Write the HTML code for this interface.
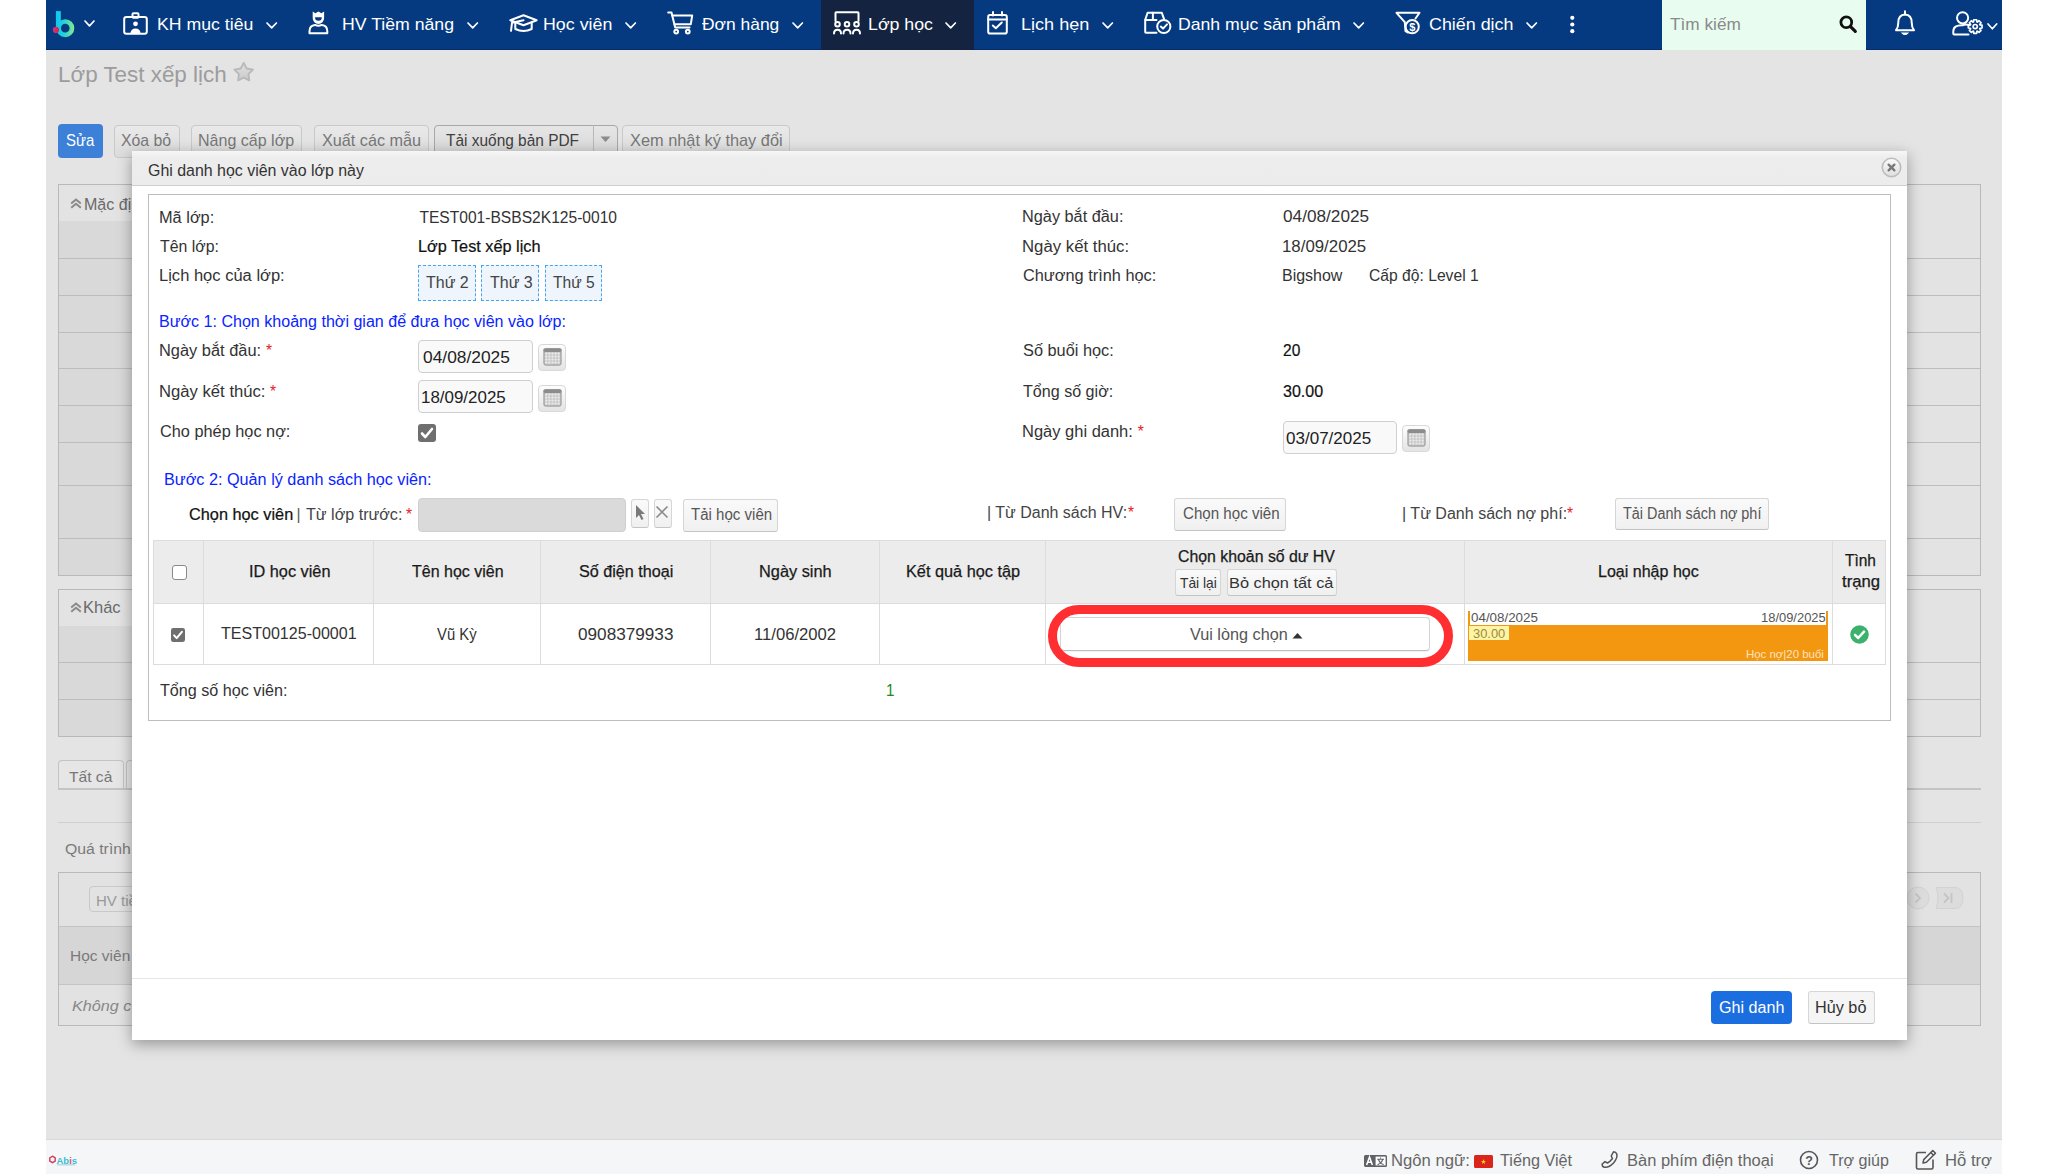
<!DOCTYPE html>
<html><head><meta charset="utf-8"><title>Ghi danh</title>
<style>
html,body{margin:0;padding:0;}
body{width:2048px;height:1174px;position:relative;overflow:hidden;background:#fff;font-family:"Liberation Sans", sans-serif;}
svg{position:absolute;overflow:visible;}
</style></head><body>
<div style="position:absolute;left:46px;top:0px;width:1956px;height:50px;background:#053a80;border-bottom:1px solid #022c6c;box-sizing:border-box;"></div>
<div style="position:absolute;left:46px;top:50px;width:1956px;height:1090px;background:#e4e4e4;"></div>
<div style="position:absolute;left:46px;top:1139px;width:1956px;height:35px;background:#f5f6f8;border-top:1px solid #d8d8d8;box-sizing:border-box;"></div>
<div style="position:absolute;left:821px;top:0px;width:153px;height:50px;background:#14233f;"></div>
<div style="position:absolute;left:1662px;top:0px;width:204px;height:50px;background:#e8fdf0;"></div>
<span style="position:absolute;left:157.43px;top:17.15px;font-size:16.6px;line-height:16.6px;color:#ffffff;white-space:nowrap;transform:scaleX(1.0657);transform-origin:0 0;">KH mục tiêu</span>
<span style="position:absolute;left:342.43px;top:17.15px;font-size:16.6px;line-height:16.6px;color:#ffffff;white-space:nowrap;transform:scaleX(1.0651);transform-origin:0 0;">HV Tiềm năng</span>
<span style="position:absolute;left:542.93px;top:17.15px;font-size:16.6px;line-height:16.6px;color:#ffffff;white-space:nowrap;transform:scaleX(1.0737);transform-origin:0 0;">Học viên</span>
<span style="position:absolute;left:702.00px;top:17.15px;font-size:16.6px;line-height:16.6px;color:#ffffff;white-space:nowrap;transform:scaleX(1.0492);transform-origin:0 0;">Đơn hàng</span>
<span style="position:absolute;left:867.63px;top:17.15px;font-size:16.6px;line-height:16.6px;color:#ffffff;white-space:nowrap;transform:scaleX(1.0706);transform-origin:0 0;">Lớp học</span>
<span style="position:absolute;left:1020.71px;top:17.15px;font-size:16.6px;line-height:16.6px;color:#ffffff;white-space:nowrap;transform:scaleX(1.0893);transform-origin:0 0;">Lịch hẹn</span>
<span style="position:absolute;left:1177.94px;top:17.15px;font-size:16.6px;line-height:16.6px;color:#ffffff;white-space:nowrap;transform:scaleX(1.0622);transform-origin:0 0;">Danh mục sản phẩm</span>
<span style="position:absolute;left:1429.40px;top:17.15px;font-size:16.6px;line-height:16.6px;color:#ffffff;white-space:nowrap;transform:scaleX(1.0770);transform-origin:0 0;">Chiến dịch</span>
<span style="position:absolute;left:1670.40px;top:17.15px;font-size:16.6px;line-height:16.6px;color:#8a8a8a;white-space:nowrap;transform:scaleX(1.0387);transform-origin:0 0;">Tìm kiếm</span>
<span style="position:absolute;left:57.96px;top:65.00px;font-size:21.5px;line-height:21.5px;color:#9c9c9c;white-space:nowrap;transform:scaleX(1.0416);transform-origin:0 0;">Lớp Test xếp lịch</span>
<div style="position:absolute;left:58px;top:124px;width:45px;height:34px;background:#3d80d8;border-radius:4px;"></div>
<span style="position:absolute;left:66.00px;top:132.32px;font-size:16.4px;line-height:16.4px;color:#ffffff;white-space:nowrap;transform:scaleX(0.9090);transform-origin:0 0;">Sửa</span>
<div style="position:absolute;left:113.5px;top:124.5px;width:66px;height:33.5px;background:linear-gradient(#e9e9e9,#dcdcdc);border:1px solid #c9c9c9;border-radius:4px;box-sizing:border-box;"></div>
<span style="position:absolute;left:121.00px;top:132.32px;font-size:16.4px;line-height:16.4px;color:#777;white-space:nowrap;transform:scaleX(0.9646);transform-origin:0 0;">Xóa bỏ</span>
<div style="position:absolute;left:191px;top:124.5px;width:111px;height:33.5px;background:linear-gradient(#e9e9e9,#dcdcdc);border:1px solid #c9c9c9;border-radius:4px;box-sizing:border-box;"></div>
<span style="position:absolute;left:198.02px;top:132.32px;font-size:16.4px;line-height:16.4px;color:#777;white-space:nowrap;transform:scaleX(0.9783);transform-origin:0 0;">Nâng cấp lớp</span>
<div style="position:absolute;left:314px;top:124.5px;width:115px;height:33.5px;background:linear-gradient(#e9e9e9,#dcdcdc);border:1px solid #c9c9c9;border-radius:4px;box-sizing:border-box;"></div>
<span style="position:absolute;left:322.00px;top:132.32px;font-size:16.4px;line-height:16.4px;color:#777;white-space:nowrap;transform:scaleX(0.9890);transform-origin:0 0;">Xuất các mẫu</span>
<div style="position:absolute;left:433.5px;top:124.5px;width:184px;height:33.5px;background:linear-gradient(#e6e6e6,#d6d6d6);border:1px solid #a8a8a8;border-radius:4px;box-sizing:border-box;"></div>
<span style="position:absolute;left:446.00px;top:132.32px;font-size:16.4px;line-height:16.4px;color:#404040;white-space:nowrap;transform:scaleX(0.9419);transform-origin:0 0;">Tải xuống bản PDF</span>
<div style="position:absolute;left:592.5px;top:125px;width:1px;height:33px;background:#b8b8b8;"></div>
<div style="position:absolute;left:622px;top:124.5px;width:168px;height:33.5px;background:linear-gradient(#e9e9e9,#dcdcdc);border:1px solid #c9c9c9;border-radius:4px;box-sizing:border-box;"></div>
<span style="position:absolute;left:630.00px;top:132.32px;font-size:16.4px;line-height:16.4px;color:#777;white-space:nowrap;transform:scaleX(0.9972);transform-origin:0 0;">Xem nhật ký thay đổi</span>
<div style="position:absolute;left:58px;top:184px;width:1923px;height:392px;border:1px solid #b9b9b9;box-sizing:border-box;background:#e3e3e3;"></div>
<div style="position:absolute;left:59px;top:221px;width:100px;height:354px;background:#d9d9d9;"></div>
<div style="position:absolute;left:59px;top:258px;width:1921px;height:1px;background:#bdbdbd;"></div>
<div style="position:absolute;left:59px;top:295px;width:1921px;height:1px;background:#bdbdbd;"></div>
<div style="position:absolute;left:59px;top:332px;width:1921px;height:1px;background:#bdbdbd;"></div>
<div style="position:absolute;left:59px;top:368px;width:1921px;height:1px;background:#bdbdbd;"></div>
<div style="position:absolute;left:59px;top:405px;width:1921px;height:1px;background:#bdbdbd;"></div>
<div style="position:absolute;left:59px;top:442px;width:1921px;height:1px;background:#bdbdbd;"></div>
<div style="position:absolute;left:59px;top:485px;width:1921px;height:1px;background:#bdbdbd;"></div>
<div style="position:absolute;left:59px;top:538px;width:1921px;height:1px;background:#bdbdbd;"></div>
<span style="position:absolute;left:84.32px;top:195.50px;font-size:16.3px;line-height:16.3px;color:#6a6a6a;white-space:nowrap;transform:scaleX(0.9842);transform-origin:0 0;">Mặc định</span>
<div style="position:absolute;left:58px;top:589px;width:1923px;height:148px;border:1px solid #b9b9b9;box-sizing:border-box;background:#e3e3e3;"></div>
<div style="position:absolute;left:59px;top:626px;width:100px;height:110px;background:#d9d9d9;"></div>
<div style="position:absolute;left:59px;top:662px;width:1921px;height:1px;background:#bdbdbd;"></div>
<div style="position:absolute;left:59px;top:699px;width:1921px;height:1px;background:#bdbdbd;"></div>
<span style="position:absolute;left:83.29px;top:599.40px;font-size:16.3px;line-height:16.3px;color:#6a6a6a;white-space:nowrap;transform:scaleX(1.0120);transform-origin:0 0;">Khác</span>
<div style="position:absolute;left:58px;top:760px;width:66px;height:28px;border:1px solid #c4c4c4;border-bottom:none;border-radius:4px 4px 0 0;box-sizing:border-box;background:#e6e6e6;"></div>
<span style="position:absolute;left:69.00px;top:768.50px;font-size:15px;line-height:15px;color:#777;white-space:nowrap;transform:scaleX(1.0392);transform-origin:0 0;">Tất cả</span>
<div style="position:absolute;left:126px;top:760px;width:20px;height:28px;border:1px solid #c4c4c4;border-bottom:none;border-radius:4px 4px 0 0;box-sizing:border-box;background:#e6e6e6;"></div>
<div style="position:absolute;left:58px;top:787.5px;width:1923px;height:2.5px;background:#c4c4c4;"></div>
<div style="position:absolute;left:58px;top:822px;width:1923px;height:1px;background:#cfcfcf;"></div>
<span style="position:absolute;left:65.20px;top:841.08px;font-size:15.5px;line-height:15.5px;color:#7a7a7a;white-space:nowrap;transform:scaleX(1.0188);transform-origin:0 0;">Quá trình</span>
<div style="position:absolute;left:58px;top:872px;width:1923px;height:154px;border:1px solid #b9b9b9;box-sizing:border-box;background:#e2e2e2;"></div>
<div style="position:absolute;left:59px;top:926px;width:1921px;height:59px;background:#d6d6d6;border-top:1px solid #c4c4c4;border-bottom:1px solid #c4c4c4;box-sizing:border-box;"></div>
<div style="position:absolute;left:89px;top:886px;width:60px;height:26px;border:1px solid #c9c9c9;border-radius:4px;box-sizing:border-box;"></div>
<span style="position:absolute;left:96.00px;top:892.50px;font-size:15px;line-height:15px;color:#999;white-space:nowrap;">HV tiềm năng</span>
<span style="position:absolute;left:70.00px;top:948.08px;font-size:15.5px;line-height:15.5px;color:#7a7a7a;white-space:nowrap;">Học viên</span>
<span style="position:absolute;left:71.60px;top:998.08px;font-size:15.5px;line-height:15.5px;color:#888;white-space:nowrap;font-style:italic;transform:scaleX(1.0450);transform-origin:0 0;">Không có dữ liệu</span>
<svg style="left:232px;top:60px" width="24" height="24" viewBox="0 0 24 24"><defs><linearGradient id="sg" x1="0" y1="0" x2="0" y2="1"><stop offset="0" stop-color="#e2e2e2"/><stop offset="1" stop-color="#c9c9c9"/></linearGradient></defs><path d="M11.70 2.90 L14.64 8.55 L21.0 9.6 L16.46 14.15 L17.3 20.3 L11.70 17.60 L6.1 20.3 L6.94 14.15 L2.4 9.6 L8.76 8.55 Z" fill="url(#sg)" stroke="#b9b9b9" stroke-width="1.9" stroke-linejoin="round"/></svg>
<svg style="left:600px;top:136px" width="11" height="7" viewBox="0 0 11 7"><path d="M0.5 0.5 L10.5 0.5 L5.5 6 Z" fill="#8c8c8c"/></svg>
<svg style="left:70px;top:198px" width="12" height="11" viewBox="0 0 12 11"><path d="M1.2 5.6 L6 1.6 L10.8 5.6 M1.2 9.8 L6 5.8 L10.8 9.8" fill="none" stroke="#8a8a8a" stroke-width="2"/></svg>
<svg style="left:70px;top:602px" width="12" height="11" viewBox="0 0 12 11"><path d="M1.2 5.6 L6 1.6 L10.8 5.6 M1.2 9.8 L6 5.8 L10.8 9.8" fill="none" stroke="#8a8a8a" stroke-width="2"/></svg>
<svg style="left:1905px;top:886px" width="60" height="24" viewBox="0 0 60 24"><circle cx="13" cy="12" r="11" fill="#dcdcdc" stroke="#d2d2d2" stroke-width="1"/><path d="M10.5 7.5 L15 12 L10.5 16.5" fill="none" stroke="#c4c4c4" stroke-width="1.8"/><path d="M31 1.5 L50 1.5 Q58 1.5 58 12 Q58 22.5 50 22.5 L31 22.5 Q35 12 31 1.5 Z" fill="#dcdcdc" stroke="#d2d2d2" stroke-width="1"/><path d="M39 7.5 L43.5 12 L39 16.5 M46.5 7 L46.5 17" fill="none" stroke="#c4c4c4" stroke-width="1.8"/></svg>
<div style="position:absolute;left:132px;top:151px;width:1775px;height:889px;background:#ffffff;box-shadow:0 4px 14px rgba(0,0,0,0.35);"></div>
<div style="position:absolute;left:132px;top:151px;width:1775px;height:35px;background:linear-gradient(#f7f7f7,#ededed 20%,#ececec);border-bottom:1px solid #cfcfcf;box-sizing:border-box;"></div>
<span style="position:absolute;left:148.00px;top:162.78px;font-size:16.8px;line-height:16.8px;color:#333;white-space:nowrap;transform:scaleX(0.9494);transform-origin:0 0;">Ghi danh học viên vào lớp này</span>
<div style="position:absolute;left:148px;top:194px;width:1743px;height:527px;border:1px solid #bdbdbd;box-sizing:border-box;"></div>
<div style="position:absolute;left:132px;top:978px;width:1775px;height:1px;background:#e6e6e6;"></div>
<span style="position:absolute;left:158.95px;top:209.59px;font-size:15.6px;line-height:15.6px;color:#333333;white-space:nowrap;transform:scaleX(1.0485);transform-origin:0 0;">Mã lớp:</span>
<span style="position:absolute;left:419.40px;top:209.59px;font-size:15.6px;line-height:15.6px;color:#333333;white-space:nowrap;">TEST001-BSBS2K125-0010</span>
<span style="position:absolute;left:160.00px;top:239.19px;font-size:15.6px;line-height:15.6px;color:#333333;white-space:nowrap;transform:scaleX(1.0165);transform-origin:0 0;">Tên lớp:</span>
<span style="position:absolute;left:418.36px;top:239.19px;font-size:15.6px;line-height:15.6px;color:#111;white-space:nowrap;transform:scaleX(1.0428);transform-origin:0 0;-webkit-text-stroke:0.2px currentColor;">Lớp Test xếp lịch</span>
<span style="position:absolute;left:158.94px;top:268.49px;font-size:15.6px;line-height:15.6px;color:#333333;white-space:nowrap;transform:scaleX(1.0598);transform-origin:0 0;">Lịch học của lớp:</span>
<div style="position:absolute;left:418px;top:265px;width:58px;height:36px;background:#eef5fd;border:1px dashed #4aa3ef;box-sizing:border-box;"></div>
<div style="position:absolute;left:481.4px;top:265px;width:57.5px;height:36px;background:#eef5fd;border:1px dashed #4aa3ef;box-sizing:border-box;"></div>
<div style="position:absolute;left:544.8px;top:265px;width:57.3px;height:36px;background:#eef5fd;border:1px dashed #4aa3ef;box-sizing:border-box;"></div>
<span style="position:absolute;left:426.00px;top:274.99px;font-size:15.6px;line-height:15.6px;color:#444;white-space:nowrap;transform:scaleX(1.0252);transform-origin:0 0;">Thứ 2</span>
<span style="position:absolute;left:489.50px;top:274.99px;font-size:15.6px;line-height:15.6px;color:#444;white-space:nowrap;transform:scaleX(1.0252);transform-origin:0 0;">Thứ 3</span>
<span style="position:absolute;left:553.00px;top:274.99px;font-size:15.6px;line-height:15.6px;color:#444;white-space:nowrap;">Thứ 5</span>
<span style="position:absolute;left:1022.36px;top:209.19px;font-size:15.6px;line-height:15.6px;color:#333333;white-space:nowrap;transform:scaleX(1.0447);transform-origin:0 0;">Ngày bắt đầu:</span>
<span style="position:absolute;left:1282.70px;top:209.19px;font-size:15.6px;line-height:15.6px;color:#333333;white-space:nowrap;transform:scaleX(1.1037);transform-origin:0 0;">04/08/2025</span>
<span style="position:absolute;left:1022.33px;top:238.99px;font-size:15.6px;line-height:15.6px;color:#333333;white-space:nowrap;transform:scaleX(1.0745);transform-origin:0 0;">Ngày kết thúc:</span>
<span style="position:absolute;left:1281.62px;top:238.99px;font-size:15.6px;line-height:15.6px;color:#333333;white-space:nowrap;transform:scaleX(1.0792);transform-origin:0 0;">18/09/2025</span>
<span style="position:absolute;left:1023.40px;top:268.39px;font-size:15.6px;line-height:15.6px;color:#333333;white-space:nowrap;transform:scaleX(1.0472);transform-origin:0 0;">Chương trình học:</span>
<span style="position:absolute;left:1281.68px;top:268.39px;font-size:15.6px;line-height:15.6px;color:#333333;white-space:nowrap;transform:scaleX(1.0242);transform-origin:0 0;">Bigshow</span>
<span style="position:absolute;left:1368.60px;top:268.39px;font-size:15.6px;line-height:15.6px;color:#333333;white-space:nowrap;transform:scaleX(1.0041);transform-origin:0 0;">Cấp độ: Level 1</span>
<span style="position:absolute;left:158.97px;top:313.99px;font-size:15.6px;line-height:15.6px;color:#0a24ff;white-space:nowrap;transform:scaleX(1.0305);transform-origin:0 0;">Bước 1: Chọn khoảng thời gian để đưa học viên vào lớp:</span>
<span style="position:absolute;left:158.95px;top:343.19px;font-size:15.6px;line-height:15.6px;color:#333333;white-space:nowrap;transform:scaleX(1.0521);transform-origin:0 0;">Ngày bắt đầu:</span>
<span style="position:absolute;left:266.00px;top:343.19px;font-size:15.6px;line-height:15.6px;color:#e8201e;white-space:nowrap;">*</span>
<span style="position:absolute;left:158.93px;top:383.99px;font-size:15.6px;line-height:15.6px;color:#333333;white-space:nowrap;transform:scaleX(1.0684);transform-origin:0 0;">Ngày kết thúc:</span>
<span style="position:absolute;left:270.00px;top:383.99px;font-size:15.6px;line-height:15.6px;color:#e8201e;white-space:nowrap;">*</span>
<span style="position:absolute;left:160.00px;top:424.39px;font-size:15.6px;line-height:15.6px;color:#333333;white-space:nowrap;transform:scaleX(1.0459);transform-origin:0 0;">Cho phép học nợ:</span>
<div style="position:absolute;left:418.4px;top:340px;width:115px;height:33px;background:#f9f9f9;border:1px solid #cfcfcf;border-radius:4px;box-sizing:border-box;"></div>
<span style="position:absolute;left:422.50px;top:348.73px;font-size:16.5px;line-height:16.5px;color:#222;white-space:nowrap;transform:scaleX(1.0521);transform-origin:0 0;">04/08/2025</span>
<div style="position:absolute;left:538px;top:344px;width:28px;height:27px;border:1px solid #d8d8d8;border-radius:4px;box-sizing:border-box;background:linear-gradient(#fdfdfd,#e4e4e4);"></div>
<svg style="left:542.6px;top:348.4px" width="19" height="18" viewBox="0 0 19 18"><rect x="0.3" y="0.3" width="18.4" height="17.4" rx="3" fill="#a4a4a4"/><rect x="0.3" y="0.3" width="18.4" height="3.6" rx="2" fill="#8c8c8c"/><rect x="1.6" y="3.9" width="15.8" height="12.5" rx="1.5" fill="#c6c6c6"/>
<g fill="#ececec"><rect x="2.2" y="4.5" width="2.1" height="2" rx="0.5"/><rect x="5.3" y="4.5" width="2.1" height="2" rx="0.5"/><rect x="8.4" y="4.5" width="2.1" height="2" rx="0.5"/><rect x="11.5" y="4.5" width="2.1" height="2" rx="0.5"/><rect x="14.6" y="4.5" width="2.1" height="2" rx="0.5"/><rect x="2.2" y="7.5" width="2.1" height="2" rx="0.5"/><rect x="5.3" y="7.5" width="2.1" height="2" rx="0.5"/><rect x="8.4" y="7.5" width="2.1" height="2" rx="0.5"/><rect x="11.5" y="7.5" width="2.1" height="2" rx="0.5"/><rect x="14.6" y="7.5" width="2.1" height="2" rx="0.5"/><rect x="2.2" y="10.5" width="2.1" height="2" rx="0.5"/><rect x="5.3" y="10.5" width="2.1" height="2" rx="0.5"/><rect x="8.4" y="10.5" width="2.1" height="2" rx="0.5"/><rect x="11.5" y="10.5" width="2.1" height="2" rx="0.5"/><rect x="14.6" y="10.5" width="2.1" height="2" rx="0.5"/><rect x="2.2" y="13.5" width="2.1" height="2" rx="0.5"/><rect x="5.3" y="13.5" width="2.1" height="2" rx="0.5"/><rect x="8.4" y="13.5" width="2.1" height="2" rx="0.5"/><rect x="11.5" y="13.5" width="2.1" height="2" rx="0.5"/><rect x="14.6" y="13.5" width="2.1" height="2" rx="0.5"/></g></svg>
<div style="position:absolute;left:418.4px;top:380.3px;width:115px;height:33px;background:#f9f9f9;border:1px solid #cfcfcf;border-radius:4px;box-sizing:border-box;"></div>
<span style="position:absolute;left:421.47px;top:389.23px;font-size:16.5px;line-height:16.5px;color:#222;white-space:nowrap;transform:scaleX(1.0257);transform-origin:0 0;">18/09/2025</span>
<div style="position:absolute;left:538px;top:384.5px;width:28px;height:27px;border:1px solid #d8d8d8;border-radius:4px;box-sizing:border-box;background:linear-gradient(#fdfdfd,#e4e4e4);"></div>
<svg style="left:542.6px;top:388.9px" width="19" height="18" viewBox="0 0 19 18"><rect x="0.3" y="0.3" width="18.4" height="17.4" rx="3" fill="#a4a4a4"/><rect x="0.3" y="0.3" width="18.4" height="3.6" rx="2" fill="#8c8c8c"/><rect x="1.6" y="3.9" width="15.8" height="12.5" rx="1.5" fill="#c6c6c6"/>
<g fill="#ececec"><rect x="2.2" y="4.5" width="2.1" height="2" rx="0.5"/><rect x="5.3" y="4.5" width="2.1" height="2" rx="0.5"/><rect x="8.4" y="4.5" width="2.1" height="2" rx="0.5"/><rect x="11.5" y="4.5" width="2.1" height="2" rx="0.5"/><rect x="14.6" y="4.5" width="2.1" height="2" rx="0.5"/><rect x="2.2" y="7.5" width="2.1" height="2" rx="0.5"/><rect x="5.3" y="7.5" width="2.1" height="2" rx="0.5"/><rect x="8.4" y="7.5" width="2.1" height="2" rx="0.5"/><rect x="11.5" y="7.5" width="2.1" height="2" rx="0.5"/><rect x="14.6" y="7.5" width="2.1" height="2" rx="0.5"/><rect x="2.2" y="10.5" width="2.1" height="2" rx="0.5"/><rect x="5.3" y="10.5" width="2.1" height="2" rx="0.5"/><rect x="8.4" y="10.5" width="2.1" height="2" rx="0.5"/><rect x="11.5" y="10.5" width="2.1" height="2" rx="0.5"/><rect x="14.6" y="10.5" width="2.1" height="2" rx="0.5"/><rect x="2.2" y="13.5" width="2.1" height="2" rx="0.5"/><rect x="5.3" y="13.5" width="2.1" height="2" rx="0.5"/><rect x="8.4" y="13.5" width="2.1" height="2" rx="0.5"/><rect x="11.5" y="13.5" width="2.1" height="2" rx="0.5"/><rect x="14.6" y="13.5" width="2.1" height="2" rx="0.5"/></g></svg>
<svg style="left:418.4px;top:424px" width="18" height="18" viewBox="0 0 18 18"><rect x="0" y="0" width="18" height="18" rx="3" fill="#6f6f6f"/><path d="M4 9.5 L7.3 13 L14 5" stroke="#fff" stroke-width="2.6" fill="none" stroke-linecap="round" stroke-linejoin="round"/></svg>
<span style="position:absolute;left:1023.40px;top:343.39px;font-size:15.6px;line-height:15.6px;color:#333333;white-space:nowrap;transform:scaleX(1.0473);transform-origin:0 0;">Số buổi học:</span>
<span style="position:absolute;left:1282.70px;top:343.39px;font-size:15.6px;line-height:15.6px;color:#111;white-space:nowrap;transform:scaleX(0.9959);transform-origin:0 0;-webkit-text-stroke:0.2px currentColor;">20</span>
<span style="position:absolute;left:1023.40px;top:383.59px;font-size:15.6px;line-height:15.6px;color:#333333;white-space:nowrap;transform:scaleX(1.0321);transform-origin:0 0;">Tổng số giờ:</span>
<span style="position:absolute;left:1282.70px;top:383.59px;font-size:15.6px;line-height:15.6px;color:#111;white-space:nowrap;transform:scaleX(1.0292);transform-origin:0 0;-webkit-text-stroke:0.2px currentColor;">30.00</span>
<span style="position:absolute;left:1022.34px;top:423.99px;font-size:15.6px;line-height:15.6px;color:#333333;white-space:nowrap;transform:scaleX(1.0569);transform-origin:0 0;">Ngày ghi danh:</span>
<span style="position:absolute;left:1137.70px;top:423.99px;font-size:15.6px;line-height:15.6px;color:#e8201e;white-space:nowrap;">*</span>
<div style="position:absolute;left:1282.7px;top:421px;width:114.5px;height:33px;background:#f9f9f9;border:1px solid #cfcfcf;border-radius:4px;box-sizing:border-box;"></div>
<span style="position:absolute;left:1285.70px;top:429.63px;font-size:16.5px;line-height:16.5px;color:#222;white-space:nowrap;transform:scaleX(1.0315);transform-origin:0 0;">03/07/2025</span>
<div style="position:absolute;left:1402px;top:425px;width:28px;height:27px;border:1px solid #d8d8d8;border-radius:4px;box-sizing:border-box;background:linear-gradient(#fdfdfd,#e4e4e4);"></div>
<svg style="left:1406.6px;top:429.4px" width="19" height="18" viewBox="0 0 19 18"><rect x="0.3" y="0.3" width="18.4" height="17.4" rx="3" fill="#a4a4a4"/><rect x="0.3" y="0.3" width="18.4" height="3.6" rx="2" fill="#8c8c8c"/><rect x="1.6" y="3.9" width="15.8" height="12.5" rx="1.5" fill="#c6c6c6"/>
<g fill="#ececec"><rect x="2.2" y="4.5" width="2.1" height="2" rx="0.5"/><rect x="5.3" y="4.5" width="2.1" height="2" rx="0.5"/><rect x="8.4" y="4.5" width="2.1" height="2" rx="0.5"/><rect x="11.5" y="4.5" width="2.1" height="2" rx="0.5"/><rect x="14.6" y="4.5" width="2.1" height="2" rx="0.5"/><rect x="2.2" y="7.5" width="2.1" height="2" rx="0.5"/><rect x="5.3" y="7.5" width="2.1" height="2" rx="0.5"/><rect x="8.4" y="7.5" width="2.1" height="2" rx="0.5"/><rect x="11.5" y="7.5" width="2.1" height="2" rx="0.5"/><rect x="14.6" y="7.5" width="2.1" height="2" rx="0.5"/><rect x="2.2" y="10.5" width="2.1" height="2" rx="0.5"/><rect x="5.3" y="10.5" width="2.1" height="2" rx="0.5"/><rect x="8.4" y="10.5" width="2.1" height="2" rx="0.5"/><rect x="11.5" y="10.5" width="2.1" height="2" rx="0.5"/><rect x="14.6" y="10.5" width="2.1" height="2" rx="0.5"/><rect x="2.2" y="13.5" width="2.1" height="2" rx="0.5"/><rect x="5.3" y="13.5" width="2.1" height="2" rx="0.5"/><rect x="8.4" y="13.5" width="2.1" height="2" rx="0.5"/><rect x="11.5" y="13.5" width="2.1" height="2" rx="0.5"/><rect x="14.6" y="13.5" width="2.1" height="2" rx="0.5"/></g></svg>
<span style="position:absolute;left:163.56px;top:471.99px;font-size:15.6px;line-height:15.6px;color:#0a24ff;white-space:nowrap;transform:scaleX(1.0401);transform-origin:0 0;">Bước 2: Quản lý danh sách học viên:</span>
<span style="position:absolute;left:188.50px;top:506.99px;font-size:15.6px;line-height:15.6px;color:#111;white-space:nowrap;transform:scaleX(1.0452);transform-origin:0 0;-webkit-text-stroke:0.22px currentColor;">Chọn học viên</span>
<span style="position:absolute;left:296.50px;top:506.99px;font-size:15.6px;line-height:15.6px;color:#555;white-space:nowrap;">|</span>
<span style="position:absolute;left:306.40px;top:506.99px;font-size:15.6px;line-height:15.6px;color:#444;white-space:nowrap;transform:scaleX(1.0328);transform-origin:0 0;">Từ lớp trước:</span>
<span style="position:absolute;left:406.00px;top:506.99px;font-size:15.6px;line-height:15.6px;color:#e8201e;white-space:nowrap;">*</span>
<div style="position:absolute;left:418px;top:497.5px;width:208px;height:34px;background:#dadada;border:1px solid #cfcfcf;border-radius:4px;box-sizing:border-box;"></div>
<div style="position:absolute;left:630.5px;top:499px;width:18px;height:28.5px;background:linear-gradient(#fafafa,#f0f0f0);border:1px solid #d6d6d6;border-bottom-color:#c4c4c4;border-radius:3px;box-sizing:border-box;"></div>
<svg style="left:633px;top:503px" width="14" height="18" viewBox="0 0 14 18"><path d="M3 2 L3 15 L6 12 L8.5 17 L10.5 16 L8 11 L12 11 Z" fill="#7a7a7a"/></svg>
<div style="position:absolute;left:653.5px;top:499px;width:18px;height:28.5px;background:linear-gradient(#fafafa,#f0f0f0);border:1px solid #d6d6d6;border-bottom-color:#c4c4c4;border-radius:3px;box-sizing:border-box;"></div>
<svg style="left:655px;top:505px" width="14" height="14" viewBox="0 0 14 14"><path d="M1.5 1.5 L12.5 12.5 M12.5 1.5 L1.5 12.5" stroke="#8a8a8a" stroke-width="1.6"/></svg>
<div style="position:absolute;left:682.6px;top:499px;width:95px;height:33px;background:linear-gradient(#fafafa,#f0f0f0);border:1px solid #d6d6d6;border-bottom-color:#c4c4c4;border-radius:3px;box-sizing:border-box;"></div>
<span style="position:absolute;left:690.50px;top:507.49px;font-size:15.6px;line-height:15.6px;color:#555;white-space:nowrap;transform:scaleX(0.9652);transform-origin:0 0;">Tải học viên</span>
<span style="position:absolute;left:987.38px;top:504.99px;font-size:15.6px;line-height:15.6px;color:#444;white-space:nowrap;transform:scaleX(1.0249);transform-origin:0 0;">| Từ Danh sách HV:</span>
<span style="position:absolute;left:1128.00px;top:504.99px;font-size:15.6px;line-height:15.6px;color:#e8201e;white-space:nowrap;">*</span>
<div style="position:absolute;left:1174.4px;top:498px;width:112px;height:33px;background:linear-gradient(#fafafa,#f0f0f0);border:1px solid #d6d6d6;border-bottom-color:#c4c4c4;border-radius:3px;box-sizing:border-box;"></div>
<span style="position:absolute;left:1182.50px;top:505.99px;font-size:15.6px;line-height:15.6px;color:#555;white-space:nowrap;transform:scaleX(0.9695);transform-origin:0 0;">Chọn học viên</span>
<span style="position:absolute;left:1401.67px;top:505.79px;font-size:15.6px;line-height:15.6px;color:#444;white-space:nowrap;transform:scaleX(1.0286);transform-origin:0 0;">| Từ Danh sách nợ phí:</span>
<span style="position:absolute;left:1567.00px;top:505.79px;font-size:15.6px;line-height:15.6px;color:#e8201e;white-space:nowrap;">*</span>
<div style="position:absolute;left:1614.6px;top:498.2px;width:154.5px;height:32px;background:linear-gradient(#fafafa,#f0f0f0);border:1px solid #d6d6d6;border-bottom-color:#c4c4c4;border-radius:3px;box-sizing:border-box;"></div>
<span style="position:absolute;left:1622.50px;top:505.99px;font-size:15.6px;line-height:15.6px;color:#555;white-space:nowrap;transform:scaleX(0.9239);transform-origin:0 0;">Tải Danh sách nợ phí</span>
<div style="position:absolute;left:152.7px;top:540px;width:1733.8px;height:63px;background:#ececec;"></div>
<div style="position:absolute;left:152.7px;top:540px;width:1733.8px;height:125px;border:1px solid #dcdcdc;box-sizing:border-box;"></div>
<div style="position:absolute;left:152.7px;top:603px;width:1733.8px;height:1px;background:#dcdcdc;"></div>
<div style="position:absolute;left:203.3px;top:540px;width:1px;height:124px;background:#dcdcdc;"></div>
<div style="position:absolute;left:373.3px;top:540px;width:1px;height:124px;background:#dcdcdc;"></div>
<div style="position:absolute;left:540px;top:540px;width:1px;height:124px;background:#dcdcdc;"></div>
<div style="position:absolute;left:710px;top:540px;width:1px;height:124px;background:#dcdcdc;"></div>
<div style="position:absolute;left:879px;top:540px;width:1px;height:124px;background:#dcdcdc;"></div>
<div style="position:absolute;left:1045px;top:540px;width:1px;height:124px;background:#dcdcdc;"></div>
<div style="position:absolute;left:1464px;top:540px;width:1px;height:124px;background:#dcdcdc;"></div>
<div style="position:absolute;left:1832px;top:540px;width:1px;height:124px;background:#dcdcdc;"></div>
<div style="position:absolute;left:172px;top:565px;width:14.5px;height:14.5px;background:#fff;border:1px solid #8a8a8a;border-radius:3px;box-sizing:border-box;"></div>
<svg style="left:171px;top:628px" width="14" height="14" viewBox="0 0 18 18"><rect x="0" y="0" width="18" height="18" rx="3" fill="#6f6f6f"/><path d="M4 9.5 L7.3 13 L14 5" stroke="#fff" stroke-width="2.6" fill="none" stroke-linecap="round" stroke-linejoin="round"/></svg>
<span style="position:absolute;left:248.76px;top:563.99px;font-size:15.6px;line-height:15.6px;color:#1a1a1a;white-space:nowrap;transform:scaleX(1.0441);transform-origin:0 0;-webkit-text-stroke:0.25px currentColor;">ID học viên</span>
<span style="position:absolute;left:412.40px;top:563.99px;font-size:15.6px;line-height:15.6px;color:#1a1a1a;white-space:nowrap;transform:scaleX(1.0258);transform-origin:0 0;-webkit-text-stroke:0.25px currentColor;">Tên học viên</span>
<span style="position:absolute;left:579.30px;top:563.99px;font-size:15.6px;line-height:15.6px;color:#1a1a1a;white-space:nowrap;transform:scaleX(1.0357);transform-origin:0 0;-webkit-text-stroke:0.25px currentColor;">Số điện thoại</span>
<span style="position:absolute;left:759.25px;top:563.99px;font-size:15.6px;line-height:15.6px;color:#1a1a1a;white-space:nowrap;transform:scaleX(1.0477);transform-origin:0 0;-webkit-text-stroke:0.25px currentColor;">Ngày sinh</span>
<span style="position:absolute;left:905.96px;top:563.99px;font-size:15.6px;line-height:15.6px;color:#1a1a1a;white-space:nowrap;transform:scaleX(1.0445);transform-origin:0 0;-webkit-text-stroke:0.25px currentColor;">Kết quả học tập</span>
<span style="position:absolute;left:1177.50px;top:549.49px;font-size:15.6px;line-height:15.6px;color:#1a1a1a;white-space:nowrap;transform:scaleX(1.0165);transform-origin:0 0;-webkit-text-stroke:0.25px currentColor;">Chọn khoản số dư HV</span>
<div style="position:absolute;left:1175.3px;top:569px;width:45.7px;height:27px;background:linear-gradient(#fafafa,#f0f0f0);border:1px solid #d6d6d6;border-bottom-color:#c4c4c4;border-radius:3px;box-sizing:border-box;"></div>
<span style="position:absolute;left:1180.00px;top:574.70px;font-size:15px;line-height:15px;color:#333;white-space:nowrap;transform:scaleX(0.9199);transform-origin:0 0;">Tải lại</span>
<div style="position:absolute;left:1227.3px;top:569px;width:110px;height:27px;background:linear-gradient(#fafafa,#f0f0f0);border:1px solid #d6d6d6;border-bottom-color:#c4c4c4;border-radius:3px;box-sizing:border-box;"></div>
<span style="position:absolute;left:1229.41px;top:574.70px;font-size:15px;line-height:15px;color:#333;white-space:nowrap;transform:scaleX(1.0884);transform-origin:0 0;">Bỏ chọn tất cả</span>
<span style="position:absolute;left:1598.47px;top:563.99px;font-size:15.6px;line-height:15.6px;color:#1a1a1a;white-space:nowrap;transform:scaleX(1.0280);transform-origin:0 0;-webkit-text-stroke:0.25px currentColor;">Loại nhập học</span>
<span style="position:absolute;left:1845.30px;top:553.29px;font-size:15.6px;line-height:15.6px;color:#1a1a1a;white-space:nowrap;transform:scaleX(0.9925);transform-origin:0 0;-webkit-text-stroke:0.25px currentColor;">Tình</span>
<span style="position:absolute;left:1841.70px;top:574.49px;font-size:15.6px;line-height:15.6px;color:#1a1a1a;white-space:nowrap;transform:scaleX(1.0697);transform-origin:0 0;-webkit-text-stroke:0.25px currentColor;">trạng</span>
<span style="position:absolute;left:221.30px;top:626.39px;font-size:15.6px;line-height:15.6px;color:#333333;white-space:nowrap;transform:scaleX(1.0290);transform-origin:0 0;">TEST00125-00001</span>
<span style="position:absolute;left:436.70px;top:626.59px;font-size:15.6px;line-height:15.6px;color:#333333;white-space:nowrap;transform:scaleX(0.9544);transform-origin:0 0;">Vũ Kỳ</span>
<span style="position:absolute;left:577.80px;top:626.59px;font-size:15.6px;line-height:15.6px;color:#333333;white-space:nowrap;transform:scaleX(1.1005);transform-origin:0 0;">0908379933</span>
<span style="position:absolute;left:753.83px;top:626.59px;font-size:15.6px;line-height:15.6px;color:#333333;white-space:nowrap;transform:scaleX(1.0663);transform-origin:0 0;">11/06/2002</span>
<div style="position:absolute;left:1060.4px;top:617.3px;width:369.5px;height:33.3px;background:#fff;border:1px solid #d4d4d4;border-bottom-color:#bdbdbd;border-radius:4px;box-sizing:border-box;box-shadow:0 1px 1px rgba(0,0,0,0.06);"></div>
<span style="position:absolute;left:1190.00px;top:627.19px;font-size:15.6px;line-height:15.6px;color:#555;white-space:nowrap;transform:scaleX(1.0402);transform-origin:0 0;">Vui lòng chọn</span>
<svg style="left:1292px;top:631.5px" width="11" height="7" viewBox="0 0 11 7"><path d="M0.5 6.5 L5.5 1 L10.5 6.5 Z" fill="#333"/></svg>
<div style="position:absolute;left:1048.2px;top:604.8px;width:405.3px;height:62.5px;border:9.2px solid #ff2e31;border-radius:31.5px;box-sizing:border-box;"></div>
<div style="position:absolute;left:1468.2px;top:625.1px;width:359.8px;height:35.7px;background:#f39610;"></div>
<div style="position:absolute;left:1468.2px;top:611px;width:2px;height:14px;background:#f39610;"></div>
<div style="position:absolute;left:1826px;top:611px;width:2px;height:14px;background:#f39610;"></div>
<div style="position:absolute;left:1468.6px;top:625.8px;width:40.4px;height:14.4px;background:#fff3a6;"></div>
<span style="position:absolute;left:1473.00px;top:626.70px;font-size:13px;line-height:13px;color:#9a8a3a;white-space:nowrap;transform:scaleX(0.9907);transform-origin:0 0;">30.00</span>
<span style="position:absolute;left:1470.70px;top:610.53px;font-size:13.2px;line-height:13.2px;color:#555;white-space:nowrap;transform:scaleX(1.0142);transform-origin:0 0;">04/08/2025</span>
<span style="position:absolute;left:1760.82px;top:610.53px;font-size:13.2px;line-height:13.2px;color:#555;white-space:nowrap;transform:scaleX(0.9804);transform-origin:0 0;">18/09/2025</span>
<span style="position:absolute;left:1745.70px;top:649.47px;font-size:11.5px;line-height:11.5px;color:#fde4c0;white-space:nowrap;transform:scaleX(0.9943);transform-origin:0 0;">Học nợ|20 buổi</span>
<svg style="left:1849.5px;top:625px" width="19" height="19" viewBox="0 0 19 19"><circle cx="9.5" cy="9.5" r="9.3" fill="#3cb16d"/><path d="M5 9.8 L8.2 13 L14 6.6" stroke="#fff" stroke-width="2.5" fill="none" stroke-linecap="round" stroke-linejoin="round"/></svg>
<span style="position:absolute;left:160.30px;top:682.99px;font-size:15.6px;line-height:15.6px;color:#333333;white-space:nowrap;transform:scaleX(1.0357);transform-origin:0 0;">Tổng số học viên:</span>
<span style="position:absolute;left:886.03px;top:682.59px;font-size:15.6px;line-height:15.6px;color:#1a8a1a;white-space:nowrap;transform:scaleX(0.9714);transform-origin:0 0;">1</span>
<div style="position:absolute;left:1710.7px;top:991.3px;width:81.2px;height:33.2px;background:#1b6ee0;border-radius:4px;"></div>
<span style="position:absolute;left:1719.00px;top:1000.16px;font-size:16px;line-height:16px;color:#fff;white-space:nowrap;transform:scaleX(1.0072);transform-origin:0 0;">Ghi danh</span>
<div style="position:absolute;left:1808.3px;top:991.3px;width:66.8px;height:33.2px;background:linear-gradient(#fafafa,#f0f0f0);border:1px solid #d6d6d6;border-bottom-color:#c4c4c4;border-radius:3px;box-sizing:border-box;background:#f5f5f5;"></div>
<span style="position:absolute;left:1815.49px;top:1000.16px;font-size:16px;line-height:16px;color:#333;white-space:nowrap;transform:scaleX(1.0141);transform-origin:0 0;">Hủy bỏ</span>
<svg style="left:1881px;top:157px" width="21" height="21" viewBox="0 0 21 21"><defs><linearGradient id="cg" x1="0" y1="0" x2="0" y2="1"><stop offset="0" stop-color="#fbfbfb"/><stop offset="1" stop-color="#dedede"/></linearGradient></defs><circle cx="10.5" cy="10.5" r="9.2" fill="url(#cg)" stroke="#bcbcbc" stroke-width="1.6"/><path d="M7.6 7.6 L13.4 13.4 M13.4 7.6 L7.6 13.4" stroke="#787878" stroke-width="2.3" stroke-linecap="round"/></svg>
<svg style="left:46px;top:5px" width="34" height="36" viewBox="0 0 34 36"><defs><linearGradient id="lg" x1="9" y1="0" x2="28" y2="0" gradientUnits="userSpaceOnUse"><stop offset="0" stop-color="#08c8f8"/><stop offset="0.45" stop-color="#22d0dc"/><stop offset="1" stop-color="#84e98c"/></linearGradient>
<linearGradient id="rd" x1="0" y1="0" x2="1" y2="0"><stop offset="0" stop-color="#b83aa0"/><stop offset="1" stop-color="#f01a24"/></linearGradient></defs>
<rect x="9.9" y="6.1" width="4.9" height="17.5" fill="url(#lg)"/>
<circle cx="19.25" cy="23.2" r="6.7" fill="none" stroke="url(#lg)" stroke-width="4.7"/>
<circle cx="9.9" cy="24.9" r="3.1" fill="url(#rd)"/></svg>
<svg style="left:84.3px;top:20px" width="11" height="6.6" viewBox="0 0 11 6.6"><path d="M1 1 L5.5 5.8 L10 1" fill="none" stroke="#fff" stroke-width="1.7" stroke-linecap="round" stroke-linejoin="round"/></svg>
<svg style="left:123px;top:11.5px" width="25" height="23" viewBox="0 0 25 23"><rect x="1.2" y="5" width="22.6" height="16.8" rx="2.2" fill="none" stroke="#fff" stroke-width="2" stroke-linecap="round" stroke-linejoin="round"/><rect x="9.5" y="1.2" width="6" height="4.6" rx="1" fill="none" stroke="#fff" stroke-width="2" stroke-linecap="round" stroke-linejoin="round"/>
<circle cx="12.5" cy="11.8" r="2.4" fill="#fff"/><path d="M7.5 21 Q8 16.5 12.5 16.5 Q17 16.5 17.5 21 Z" fill="#fff"/></svg>
<svg style="left:266px;top:22.2px" width="11.4" height="6.7" viewBox="0 0 11.4 6.7"><path d="M1 1 L5.7 5.9 L10.4 1" fill="none" stroke="#fff" stroke-width="1.7" stroke-linecap="round" stroke-linejoin="round"/></svg>
<svg style="left:308px;top:11px" width="21" height="24" viewBox="0 0 21 24"><path d="M4.7 0.6 L7.4 2.3 L10.4 0.5 L13.4 2.3 L16.1 0.6 L16.1 7.2 A5.7 5.7 0 0 1 4.7 7.2 Z" fill="#fff"/>
<path d="M7 6.2 A3.4 3.6 0 0 0 13.8 6.2 Z" fill="#053a80"/>
<path d="M1.5 22.3 L1.5 20.2 Q1.5 14.4 7 13.9 Q10.4 15.6 13.8 13.9 Q19.3 14.4 19.3 20.2 L19.3 22.3 Z" fill="none" stroke="#fff" stroke-width="2" stroke-linecap="round" stroke-linejoin="round"/></svg>
<svg style="left:467px;top:22.2px" width="11.4" height="6.7" viewBox="0 0 11.4 6.7"><path d="M1 1 L5.7 5.9 L10.4 1" fill="none" stroke="#fff" stroke-width="1.7" stroke-linecap="round" stroke-linejoin="round"/></svg>
<svg style="left:508.5px;top:13.5px" width="29" height="19" viewBox="0 0 29 19"><path d="M1.3 6.2 L14.5 1.2 L27.7 6.2 L14.5 11.2 Z" fill="none" stroke="#fff" stroke-width="2" stroke-linecap="round" stroke-linejoin="round"/>
<path d="M6.3 8.6 L6.3 15 Q14.5 19 22.7 15 L22.7 8.6" fill="none" stroke="#fff" stroke-width="2" stroke-linecap="round" stroke-linejoin="round"/>
<path d="M14.5 6.2 L3 8.8 L2 16.8" fill="none" stroke="#fff" stroke-width="2" stroke-linecap="round" stroke-linejoin="round"/></svg>
<svg style="left:625.4px;top:22.2px" width="11.4" height="6.7" viewBox="0 0 11.4 6.7"><path d="M1 1 L5.7 5.9 L10.4 1" fill="none" stroke="#fff" stroke-width="1.7" stroke-linecap="round" stroke-linejoin="round"/></svg>
<svg style="left:667px;top:11px" width="27" height="24" viewBox="0 0 27 24"><path d="M1.2 1.5 L4.5 1.5 L8.2 16.5 L22.5 16.5" fill="none" stroke="#fff" stroke-width="2" stroke-linecap="round" stroke-linejoin="round"/><path d="M5.2 4.5 L25.2 4.5 L23.8 13.2 L7.5 13.2" fill="none" stroke="#fff" stroke-width="2" stroke-linecap="round" stroke-linejoin="round"/>
<circle cx="9.2" cy="20.6" r="1.9" fill="none" stroke="#fff" stroke-width="2" stroke-linecap="round" stroke-linejoin="round"/><circle cx="20.8" cy="20.6" r="1.9" fill="none" stroke="#fff" stroke-width="2" stroke-linecap="round" stroke-linejoin="round"/></svg>
<svg style="left:792px;top:22.2px" width="11.4" height="6.7" viewBox="0 0 11.4 6.7"><path d="M1 1 L5.7 5.9 L10.4 1" fill="none" stroke="#fff" stroke-width="1.7" stroke-linecap="round" stroke-linejoin="round"/></svg>
<svg style="left:833.3px;top:11px" width="28" height="24" viewBox="0 0 28 24"><path d="M2.5 10 L2.5 2 Q2.5 1.2 3.3 1.2 L24.7 1.2 Q25.5 1.2 25.5 2 L25.5 10" fill="none" stroke="#fff" stroke-width="2" stroke-linecap="round" stroke-linejoin="round"/>
<circle cx="4.5" cy="13.2" r="2.3" fill="none" stroke="#fff" stroke-width="2" stroke-linecap="round" stroke-linejoin="round"/><circle cx="14" cy="13.2" r="2.3" fill="none" stroke="#fff" stroke-width="2" stroke-linecap="round" stroke-linejoin="round"/><circle cx="23.5" cy="13.2" r="2.3" fill="none" stroke="#fff" stroke-width="2" stroke-linecap="round" stroke-linejoin="round"/>
<path d="M1 22.5 Q1 18.8 4.5 18.8 Q8 18.8 8 22.5 M10.5 22.5 Q10.5 18.8 14 18.8 Q17.5 18.8 17.5 22.5 M20 22.5 Q20 18.8 23.5 18.8 Q27 18.8 27 22.5" fill="none" stroke="#fff" stroke-width="2" stroke-linecap="round" stroke-linejoin="round"/></svg>
<svg style="left:944.6px;top:22.2px" width="11.4" height="6.7" viewBox="0 0 11.4 6.7"><path d="M1 1 L5.7 5.9 L10.4 1" fill="none" stroke="#fff" stroke-width="1.7" stroke-linecap="round" stroke-linejoin="round"/></svg>
<svg style="left:986.5px;top:11px" width="21" height="24" viewBox="0 0 21 24"><rect x="1.2" y="4" width="18.6" height="18.6" rx="1.8" fill="none" stroke="#fff" stroke-width="2" stroke-linecap="round" stroke-linejoin="round"/><path d="M1.2 8.5 L19.8 8.5" fill="none" stroke="#fff" stroke-width="2" stroke-linecap="round" stroke-linejoin="round"/>
<path d="M6 1 L6 4.5 M15 1 L15 4.5" fill="none" stroke="#fff" stroke-width="2" stroke-linecap="round" stroke-linejoin="round"/><path d="M5.8 14.5 L8.8 17.3 L14.8 11.5" fill="none" stroke="#fff" stroke-width="2" stroke-linecap="round" stroke-linejoin="round"/></svg>
<svg style="left:1101.8px;top:22.2px" width="11.4" height="6.7" viewBox="0 0 11.4 6.7"><path d="M1 1 L5.7 5.9 L10.4 1" fill="none" stroke="#fff" stroke-width="1.7" stroke-linecap="round" stroke-linejoin="round"/></svg>
<svg style="left:1143.5px;top:11px" width="29" height="24" viewBox="0 0 29 24"><path d="M12.5 21.8 L2 21.8 Q1.2 21.8 1.2 21 L1.2 8.8 L3.6 1.8 L17.8 1.8 L20 7.8" fill="none" stroke="#fff" stroke-width="2" stroke-linecap="round" stroke-linejoin="round"/>
<path d="M1.5 9 L12.5 9 M8.9 1.8 L8.9 9" fill="none" stroke="#fff" stroke-width="2" stroke-linecap="round" stroke-linejoin="round"/><circle cx="19.8" cy="15.5" r="6.6" fill="none" stroke="#fff" stroke-width="2" stroke-linecap="round" stroke-linejoin="round"/><path d="M16.8 15.6 L19 17.6 L23 13.4" fill="none" stroke="#fff" stroke-width="2" stroke-linecap="round" stroke-linejoin="round"/></svg>
<svg style="left:1353.4px;top:22.2px" width="11.4" height="6.7" viewBox="0 0 11.4 6.7"><path d="M1 1 L5.7 5.9 L10.4 1" fill="none" stroke="#fff" stroke-width="1.7" stroke-linecap="round" stroke-linejoin="round"/></svg>
<svg style="left:1394.5px;top:11px" width="28" height="24" viewBox="0 0 28 24"><path d="M13 21.5 L10.5 20.2 L9.8 11.2 L1.5 1.8 L24.5 1.8 L20.5 7.5" fill="none" stroke="#fff" stroke-width="2" stroke-linecap="round" stroke-linejoin="round"/><circle cx="17.2" cy="15.7" r="6.6" fill="none" stroke="#fff" stroke-width="2" stroke-linecap="round" stroke-linejoin="round"/>
<text x="17.2" y="19.6" font-size="11" font-family="Liberation Sans" font-weight="bold" fill="#fff" text-anchor="middle">$</text></svg>
<svg style="left:1526px;top:22.2px" width="11.4" height="6.7" viewBox="0 0 11.4 6.7"><path d="M1 1 L5.7 5.9 L10.4 1" fill="none" stroke="#fff" stroke-width="1.7" stroke-linecap="round" stroke-linejoin="round"/></svg>
<svg style="left:1568px;top:15px" width="9" height="20" viewBox="0 0 9 20"><circle cx="4.3" cy="2.8" r="2.1" fill="#fff"/><circle cx="4.3" cy="9.5" r="2.1" fill="#fff"/><circle cx="4.3" cy="16.2" r="2.1" fill="#fff"/></svg>
<svg style="left:1839px;top:15px" width="19" height="18" viewBox="0 0 19 18"><circle cx="7.3" cy="7.3" r="5.4" fill="none" stroke="#111" stroke-width="2.8"/><path d="M11.3 11.3 L16.3 16.3" stroke="#111" stroke-width="3.2" stroke-linecap="round"/></svg>
<svg style="left:1892.5px;top:9.5px" width="24" height="26" viewBox="0 0 24 26"><path d="M3 20.2 Q5.3 17.5 5.3 12.5 Q5.3 5 12 4.5 Q18.7 5 18.7 12.5 Q18.7 17.5 21 20.2 Z" fill="none" stroke="#fff" stroke-width="2" stroke-linecap="round" stroke-linejoin="round"/>
<path d="M12 1.2 L12 3.5" fill="none" stroke="#fff" stroke-width="2" stroke-linecap="round" stroke-linejoin="round"/><path d="M9.2 23 Q12 26 14.8 23 Z" fill="#fff" stroke="#fff" stroke-width="1.2"/></svg>
<svg style="left:1952px;top:10.5px" width="32" height="25" viewBox="0 0 32 25"><circle cx="10.6" cy="6.8" r="5.6" fill="none" stroke="#fff" stroke-width="2" stroke-linecap="round" stroke-linejoin="round" stroke-width="1.8"/><path d="M17.5 14.2 Q14 13 10.6 14.2 Q1.3 13.8 1.3 20.5 L1.3 22.5 Q1.3 23.4 2.2 23.4 L16.5 23.4" fill="none" stroke="#fff" stroke-width="2" stroke-linecap="round" stroke-linejoin="round" stroke-width="1.8"/>
<g transform="translate(23.2 15.6)"><path d="M4.70 -1.69 L6.85 -1.42 L6.85 1.42 L4.70 1.69 L4.52 2.13 L5.85 3.84 L3.84 5.85 L2.13 4.52 L1.69 4.70 L1.42 6.85 L-1.42 6.85 L-1.69 4.70 L-2.13 4.52 L-3.84 5.85 L-5.85 3.84 L-4.52 2.13 L-4.70 1.69 L-6.85 1.42 L-6.85 -1.42 L-4.70 -1.69 L-4.52 -2.13 L-5.85 -3.84 L-3.84 -5.85 L-2.13 -4.52 L-1.69 -4.70 L-1.42 -6.85 L1.42 -6.85 L1.69 -4.70 L2.13 -4.52 L3.84 -5.85 L5.85 -3.84 L4.52 -2.13 Z" fill="none" stroke="#fff" stroke-width="1.7" stroke-linejoin="round"/><circle r="2.1" fill="none" stroke="#fff" stroke-width="1.7"/></g></svg>
<svg style="left:1987.3px;top:23.3px" width="10.7" height="6.6" viewBox="0 0 10.7 6.6"><path d="M1 1 L5.35 5.8 L9.7 1" fill="none" stroke="#fff" stroke-width="1.7" stroke-linecap="round" stroke-linejoin="round"/></svg>
<span style="position:absolute;left:1391.33px;top:1152.99px;font-size:15.6px;line-height:15.6px;color:#666666;white-space:nowrap;transform:scaleX(1.0687);transform-origin:0 0;">Ngôn ngữ:</span>
<span style="position:absolute;left:1500.00px;top:1152.99px;font-size:15.6px;line-height:15.6px;color:#666666;white-space:nowrap;transform:scaleX(1.0398);transform-origin:0 0;">Tiếng Việt</span>
<span style="position:absolute;left:1626.94px;top:1152.99px;font-size:15.6px;line-height:15.6px;color:#666666;white-space:nowrap;transform:scaleX(1.0565);transform-origin:0 0;">Bàn phím điện thoại</span>
<span style="position:absolute;left:1828.50px;top:1152.99px;font-size:15.6px;line-height:15.6px;color:#666666;white-space:nowrap;transform:scaleX(1.0306);transform-origin:0 0;">Trợ giúp</span>
<span style="position:absolute;left:1944.63px;top:1152.99px;font-size:15.6px;line-height:15.6px;color:#666666;white-space:nowrap;transform:scaleX(1.0680);transform-origin:0 0;">Hỗ trợ</span>
<svg style="left:1363.5px;top:1154.5px" width="23" height="12" viewBox="0 0 23 12"><rect x="0.6" y="0.6" width="21.8" height="10.8" rx="1" fill="#5f6368" stroke="#5f6368" stroke-width="1.2"/><path d="M2.6 10 L5.5 2 L8.4 10 M3.7 7.3 L7.3 7.3" stroke="#fff" stroke-width="1.5" fill="none"/><rect x="11.6" y="1.6" width="10" height="8.8" fill="#fff"/><path d="M16.6 2.4 L16.6 3.6 M13.2 4.2 L20 4.2 M14.4 4.6 Q16 8.6 19.6 9.6 M18.8 4.6 Q17.2 8.6 13.6 9.6" stroke="#5f6368" stroke-width="1.1" fill="none"/></svg>
<svg style="left:1474.2px;top:1155px" width="19" height="13" viewBox="0 0 19 13"><rect width="19" height="13" rx="1.5" fill="#da251d"/><path d="M9.5 4 L10.1 5.9 L12 5.9 L10.5 7 L11 8.9 L9.5 7.8 L8 8.9 L8.5 7 L7 5.9 L8.9 5.9 Z" fill="#ffde00"/></svg>
<svg style="left:1599.5px;top:1150px" width="19" height="19" viewBox="0 0 19 19"><path transform="translate(19 0) scale(-1 1)" d="M5.5 1.8 Q3 1.8 2.2 4 Q1.2 8 5.5 13 Q10.5 18.2 14.8 17.2 Q17 16.5 17 14.3 L14 11.6 L11.5 13 Q8.8 11.5 6.5 8.5 L7.8 6 Z" fill="none" stroke="#555" stroke-width="1.5" stroke-linejoin="round"/></svg>
<svg style="left:1799px;top:1149.5px" width="20" height="20" viewBox="0 0 20 20"><circle cx="10" cy="10" r="8.5" fill="none" stroke="#555" stroke-width="1.6"/><text x="10" y="14.6" font-size="12.5" font-weight="bold" font-family="Liberation Sans" fill="#555" text-anchor="middle">?</text></svg>
<svg style="left:1914.5px;top:1149px" width="22" height="21" viewBox="0 0 22 21"><path d="M11 3.5 L3 3.5 Q1.5 3.5 1.5 5 L1.5 18.5 Q1.5 20 3 20 L16.5 20 Q18 20 18 18.5 L18 10.5" fill="none" stroke="#555" stroke-width="1.6"/><path d="M8 14 L8.7 10.6 L17.8 1.5 L20.5 4.2 L11.4 13.3 Z M15.8 3.5 L18.5 6.2" fill="none" stroke="#555" stroke-width="1.5" stroke-linejoin="round"/></svg>
<svg style="left:48px;top:1153px" width="30" height="14" viewBox="0 0 30 14"><path d="M4.5 3.2 L7.2 4.8 L7.2 8 L4.5 9.6 L1.8 8 L1.8 4.8 Z" fill="none" stroke="#d23a5a" stroke-width="1.4"/><text x="8.5" y="10.5" font-size="9.5" font-family="Liberation Sans" fill="#3cbcd6" font-weight="bold">Ab<tspan fill="#d65a70">i</tspan>s</text><rect x="9" y="11.5" width="18" height="0.8" fill="#7cc8d8"/></svg>
</body></html>
